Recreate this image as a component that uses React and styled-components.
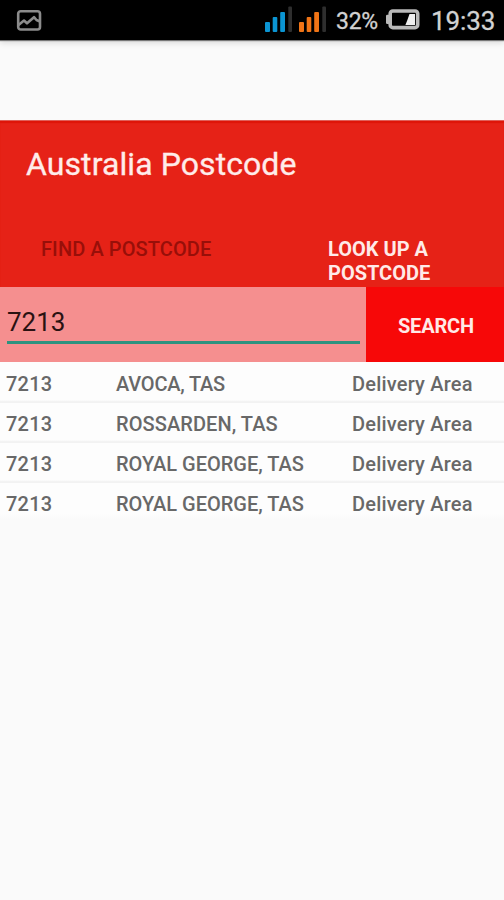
import React from 'react';
import styled, { createGlobalStyle } from 'styled-components';

const GlobalStyle = createGlobalStyle`
  * { box-sizing: border-box; }
  body { margin: 0; background: #fafafa; font-family: Roboto, "Liberation Sans", sans-serif; }
`;

const Screen = styled.main`
  width: 504px;
  height: 900px;
  overflow: hidden;
  display: flex;
  flex-direction: column;
  background: #fafafa;
  white-space: nowrap;
`;

const StatusBar = styled.div`
  flex: none;
  height: 40px;
  display: flex;
  background: #000;
  box-shadow: 0 1px 1px #777, 0 3px 6px rgba(0, 0, 0, 0.13);
`;

const PictureIcon = styled.svg`
  margin: 9px 0 0 16px;
`;

const Indicators = styled.div`
  margin-left: auto;
  display: flex;
`;

const StatusText = styled.span`
  font-size: ${(p) => p.$size}px;
  line-height: 30px;
  letter-spacing: ${(p) => p.$spacing || 0}px;
  color: #d2d2d2;
  -webkit-text-stroke: 0.3px #d2d2d2;
`;

const Charge = styled(StatusText)`
  width: 50px;
  margin-top: 7px;
`;

const Clock = styled(StatusText)`
  width: 73px;
  margin: 6px 0 0 10px;
`;

const Header = styled.header`
  flex: none;
  height: 167px;
  margin-top: 80px;
  background: #e62217;
  border-top: 1px solid #e0605a;
  box-shadow: inset 0 2px 1px #de1508;
`;

const Title = styled.h1`
  margin: 0;
  padding: 24px 0 0 26px;
  font-size: 32px;
  line-height: 38px;
  font-weight: 400;
  letter-spacing: ${(p) => p.$spacing}px;
  color: #ffecea;
  -webkit-text-stroke: 0.3px #ffecea;
`;

const Tabs = styled.nav`
  display: flex;
  margin-top: 54px;
`;

const Tab = styled.div`
  width: ${(p) => p.$width}px;
  padding-left: ${(p) => p.$inset}px;
  font-size: 20px;
  line-height: 24px;
  font-weight: ${(p) => (p.$active ? 700 : 500)};
  letter-spacing: ${(p) => p.$spacing}px;
  color: ${(p) => (p.$active ? '#ffeae8' : '#980f09')};
`;

const SearchRow = styled.div`
  flex: none;
  display: flex;
  height: 75px;
`;

const Field = styled.div`
  width: 366px;
  padding: 19px 6px 0 7px;
  background: #f58f8f;
`;

const FieldValue = styled.div`
  height: 38px;
  border-bottom: 3px solid #2d927f;
  font-size: 26px;
  line-height: 32px;
  letter-spacing: ${(p) => p.$spacing}px;
  color: #2a1212;
`;

const SearchButton = styled.div`
  flex: 1;
  padding-left: 32px;
  background: #f70808;
  color: #ffe9e7;
  font-size: 20px;
  line-height: 78px;
  font-weight: 700;
  letter-spacing: ${(p) => p.$spacing}px;
`;

const Results = styled.div`
  padding-top: 1px;
  background: linear-gradient(#fdfdfd 1px, #fafafa 1px);
`;

const Row = styled.div`
  height: 40px;
  display: grid;
  grid-template-columns: 110px 236px 1fr;
  padding: 9px 0 0 6px;
  font-size: 20px;
  line-height: 24px;
  font-weight: 500;
  color: #686868;
  background: linear-gradient(#fdfdfd 37px, #f0f0f0 39px, #f4f4f4);
  &:last-child { background: linear-gradient(#fdfdfd 30px, #fafafa 36px); }
`;

const Cell = styled.span`
  letter-spacing: ${(p) => p.$spacing}px;
`;

function SignalIcon({ color }) {
  return (
    <svg width="34" height="26" viewBox="0 0 34 26">
      <rect x="1" y="16" width="5" height="10" rx="1" fill={color} />
      <rect x="8.7" y="11" width="4.6" height="15" rx="1" fill={color} />
      <rect x="16.2" y="6" width="4.8" height="20" rx="1" fill={color} />
      <rect x="24.3" y="0.5" width="3.7" height="25.5" rx="1" fill="#2e2e2e" />
    </svg>
  );
}

const Signals = styled.div`
  display: flex;
  width: 72px;
  margin-top: 6px;
`;

const BatteryIcon = styled.svg`
  margin-top: 8px;
`;

const places = ['AVOCA, TAS', 'ROSSARDEN, TAS', 'ROYAL GEORGE, TAS', 'ROYAL GEORGE, TAS'];
const spacings = [-0.2, 0.08, 0, 0];

export default function App() {
  return (
    <Screen>
      <GlobalStyle />
      <StatusBar>
        <PictureIcon width="26" height="23" viewBox="0 0 26 23" fill="none" stroke="#8c8c8c" strokeWidth="2.6" strokeLinejoin="round">
          <rect x="2.2" y="2.2" width="21.8" height="18.3" rx="2.5" />
          <path d="M2.5 16 8 11.5 11 14.3 18 8.2 20.5 11 24 12.5" />
        </PictureIcon>
        <Indicators>
          <Signals>
            <SignalIcon color="#0b95d3" />
            <SignalIcon color="#f07416" />
          </Signals>
          <Charge $size={23} $spacing={-0.3}>32%</Charge>
          <BatteryIcon width="35" height="24" viewBox="0 0 35 24">
            <rect x="4.2" y="3" width="27.5" height="16.6" rx="2.6" fill="none" stroke="#b9b9b9" strokeWidth="3.6" />
            <rect x="0" y="6.7" width="4" height="9.3" rx="1.2" fill="#b9b9b9" />
            <path d="M23.5 6H29V17H19.4L21.2 12.5Z" fill="#eee" />
          </BatteryIcon>
          <Clock $size={26} $spacing={-0.1}>19:33</Clock>
        </Indicators>
      </StatusBar>
      <Header>
        <Title $spacing={0.08}>Australia Postcode</Title>
        <Tabs>
          <Tab $width={328} $inset={41} $spacing={0.1}>FIND A POSTCODE</Tab>
          <Tab $active $width={176} $inset={0} $spacing={0}>
            LOOK UP A<br />POSTCODE
          </Tab>
        </Tabs>
      </Header>
      <SearchRow>
        <Field><FieldValue $spacing={0}>7213</FieldValue></Field>
        <SearchButton $spacing={-0.2}>SEARCH</SearchButton>
      </SearchRow>
      <Results>
        {places.map((place, i) => (
          <Row key={i}>
            <Cell $spacing={0.25}>7213</Cell>
            <Cell $spacing={spacings[i]}>{place}</Cell>
            <Cell $spacing={0.2}>Delivery Area</Cell>
          </Row>
        ))}
      </Results>
    </Screen>
  );
}
